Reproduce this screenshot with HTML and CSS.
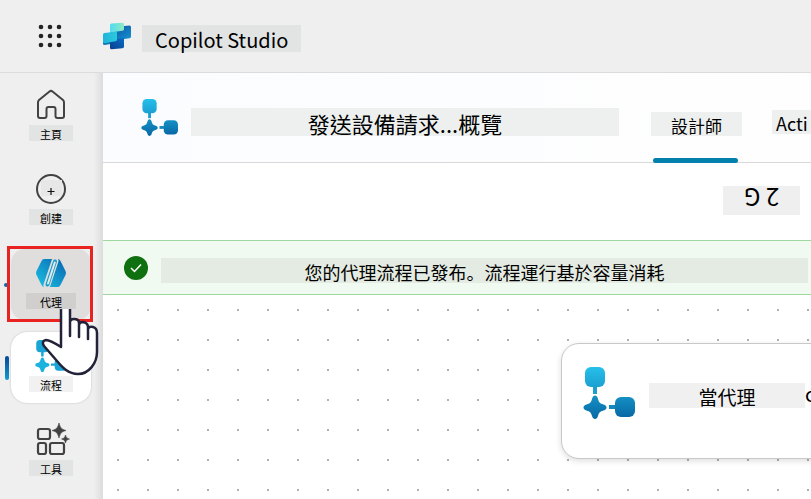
FILE: index.html
```html
<!DOCTYPE html>
<html lang="zh-Hant">
<head>
<meta charset="utf-8">
<meta name="viewport" content="width=device-width, initial-scale=1">
<title>Copilot Studio</title>
<link rel="stylesheet" href="styles.css">
</head>
<body>
<svg width="0" height="0" class="defs" aria-hidden="true">
  <defs>
    <linearGradient id="flowTop" x1="0" y1="0" x2="0" y2="1"><stop offset="0" stop-color="#25c0ea"/><stop offset="1" stop-color="#1ba0d2"/></linearGradient>
    <linearGradient id="flowLow" x1="0" y1="0" x2="0" y2="1"><stop offset="0" stop-color="#1590c4"/><stop offset="1" stop-color="#0768a6"/></linearGradient>
    <symbol id="flow" viewBox="0 0 52 52">
      <rect x="2" y="0" width="20" height="20" rx="6" fill="url(#flowTop)"/>
      <path d="M10 19h4v8h-4z" fill="#1c9fd0"/>
      <path d="M12 28.500c1.500 0 2.500 1.500 3 3.500 1 3.500 2 4.500 5.500 5.500 4 1 4 5 0 6-3.500 1-4.500 2-5.500 5.500-1 4-5 4-6 0-1-3.500-2-4.500-5.500-5.500-4-1-4-5 0-6 3.500-1 4.500-2 5.500-5.500 .5-2 1.500-3.500 3-3.500z" fill="url(#flowLow)"/>
      <path d="M26 38h8v4h-8z" fill="#1489bd"/>
      <rect x="32" y="30" width="20" height="20" rx="6" fill="url(#flowLow)"/>
    </symbol>
    <symbol id="flow-light" viewBox="0 0 52 52">
      <g fill="#19a4d6">
        <rect x="2" y="0" width="20" height="20" rx="6"/>
        <path d="M10 19h4v8h-4zM26 38h8v4h-8z"/>
        <path fill="#1bb2de" d="M12 28.500c1.500 0 2.500 1.500 3 3.500 1 3.500 2 4.500 5.500 5.500 4 1 4 5 0 6-3.500 1-4.500 2-5.500 5.500-1 4-5 4-6 0-1-3.500-2-4.500-5.500-5.500-4-1-4-5 0-6 3.500-1 4.500-2 5.500-5.500 .5-2 1.500-3.500 3-3.500z"/>
        <rect x="32" y="30" width="20" height="20" rx="6"/>
      </g>
    </symbol>
  </defs>
</svg>
<div class="app">
  <header class="topbar">
    <button class="waffle" aria-label="Apps">
      <svg width="24" height="24" viewBox="0 0 24 24" fill="#242424"><circle cx="3" cy="3" r="2.3"/><circle cx="12" cy="3" r="2.3"/><circle cx="21" cy="3" r="2.3"/><circle cx="3" cy="12" r="2.3"/><circle cx="12" cy="12" r="2.3"/><circle cx="21" cy="12" r="2.3"/><circle cx="3" cy="21" r="2.3"/><circle cx="12" cy="21" r="2.3"/><circle cx="21" cy="21" r="2.3"/></svg>
    </button>
    <svg width="30" height="28" viewBox="0 0 30 28" aria-hidden="true">
      <defs>
        <linearGradient id="lg1" x1="0" y1="0" x2="1" y2="0"><stop offset="0" stop-color="#4fdcf2"/><stop offset="1" stop-color="#8eeabf"/></linearGradient>
        <linearGradient id="lg2" x1="0" y1="0" x2="1" y2="1"><stop offset="0" stop-color="#0b4f9a"/><stop offset="1" stop-color="#1693d6"/></linearGradient>
        <linearGradient id="lg3" x1="0" y1="0" x2="1" y2="0"><stop offset="0" stop-color="#1fb4dc"/><stop offset="1" stop-color="#2cc8dc"/></linearGradient>
        <linearGradient id="lg4" x1="0" y1="1" x2="1" y2="0"><stop offset="0" stop-color="#073f91"/><stop offset="1" stop-color="#0d6cc4"/></linearGradient>
      </defs>
      <path d="M1 13L15 9L15 21L2.500 23Q1 23 1 21.500Z" fill="#0e78b4"/>
      <path d="M8 8L22 4L27.500 3.500Q29 3.500 29 5V14.500Q29 16 27.500 16.200L15 18L8 16Z" fill="url(#lg2)"/>
      <path d="M8 20L15 17L22 16V24.500Q22 26 20.500 26.200L9.500 27.200Q8 27.200 8 25.700Z" fill="url(#lg4)"/>
      <path d="M1 12.500Q1 11.300 2.500 11L15 9.500V17.500Q15 19 13.500 19.300L2 21.300Q1 21 1 19.500Z" fill="url(#lg3)"/>
      <path d="M8 3Q8 1.700 9.500 1.500L20.500 .8Q22 .8 22 2.300V7Q22 8.500 20.500 8.800L8 10.500Z" fill="url(#lg1)"/>
    </svg>
    <h1 class="brand">Copilot Studio</h1>
  </header>
  <div class="body">
    <nav class="rail">
      <a class="item home" href="#">
        <svg width="32" height="32" viewBox="0 0 32 32" fill="none" stroke="#424242" stroke-width="2" stroke-linejoin="round"><path d="M3 13.5Q3 12 4 11L14.5 2.500Q16 1.300 17.500 2.500L28 11Q29 12 29 13.500V27Q29 29 27 29H22.500Q20.500 29 20.500 27V20Q20.500 18 18.500 18H13.500Q11.500 18 11.500 20V27Q11.500 29 9.500 29H5Q3 29 3 27Z"/></svg>
        <span class="label">主頁</span>
      </a>
      <a class="item create" href="#">
        <svg width="32" height="32" viewBox="0 0 32 32" fill="none" stroke="#424242"><circle cx="16" cy="16" r="14" stroke-width="2"/><path fill="#e7e7e7" stroke="none" d="M6 7h21v16H6z"/><path d="M12.500 18.500h7M16 15v7" stroke="#111" stroke-width="1.200"/></svg>
        <span class="label">創建</span>
      </a>
      <a class="item agents" href="#">
        <svg width="32" height="32" viewBox="0 0 32 32"><defs><linearGradient id="hex" x1="0" y1="1" x2="1" y2="0"><stop offset="0" stop-color="#1cc4e4"/><stop offset="1" stop-color="#0862b0"/></linearGradient></defs><path d="M9 2H23Q24.500 2 25.500 4L30.500 14Q31.500 16 30.500 18L25.500 28Q24.500 30 23 30H9Q7.500 30 6.500 28L1.500 18Q.5 16 1.500 14L6.500 4Q7.500 2 9 2Z" fill="url(#hex)"/><path d="M20 4L12 28" stroke="#e0dedd" stroke-width="7" stroke-linecap="round"/><path d="M20 4.500L12.500 27.500" stroke="#159bcc" stroke-width="4" stroke-linecap="round"/><path d="M19.800 5.500L13 26.500" stroke="#e0eaee" stroke-width="2" stroke-linecap="round"/></svg>
        <span class="label">代理</span>
      </a>
      <a class="item flows" href="#" aria-current="page">
        <svg width="32" height="32"><use href="#flow-light"/></svg>
        <span class="label">流程</span>
      </a>
      <a class="item tools" href="#">
        <svg width="32" height="32" viewBox="0 0 32 32" fill="none" stroke="#424242" stroke-width="2.200"><rect x="3" y="5" width="12" height="10" rx="2"/><rect x="3" y="19" width="8" height="11" rx="2"/><rect x="15" y="19" width="14" height="11" rx="2"/><path d="M24 -1C25.500 4 26 5 31 6.500C26 8 25.500 9 24 14C22.500 9 22 8 17 6.500C22 5 22.500 4 24 -1ZM30.500 11C31.500 14 31.500 14 34.500 15C31.500 16 31.500 16 30.500 19C29.500 16 29.500 16 26.500 15C29.500 14 29.500 14 30.500 11Z" fill="#424242" stroke="#424242" stroke-width=".6"/></svg>
        <span class="label">工具</span>
      </a>
      <svg class="cursor" width="58" height="70" viewBox="0 0 58 70" aria-hidden="true"><path d="M20 39V1H29V28V14Q29 11 33 11Q38 11 38 15V29V17Q38 14 42 14Q47 15 47 19V31V21Q48 18 52 19Q56 20 56 25V44C56 55 48 66 37 66C27 66 21 59 16 53L3 38Q0 34 4 32Q7 31 20 39Z" fill="#fff"/><path d="M20 1V39Q9 32 5 32Q0 33 3 38L16 53C21 59 27 66 37 66C48 66 56 55 56 44V25Q56 20 52 19Q48 18 47 21V31V19Q47 15 42 14Q38 14 38 17V29V15Q38 11 33 11Q29 11 29 14V28V1" fill="none" stroke="#222238" stroke-width="2.500" stroke-linejoin="round"/></svg>
    </nav>
    <main class="panel">
      <div class="titlebar">
        <svg width="37" height="37" aria-hidden="true"><use href="#flow"/></svg>
        <h2 class="title">發送設備請求...概覽</h2>
        <div class="tabs" role="tablist">
          <button class="tab active" role="tab" aria-selected="true"><span>設計師</span></button>
          <button class="tab" role="tab" aria-selected="false"><span>Acti</span></button>
        </div>
      </div>
      <div class="toolbar"><button class="tool"><span>2 G</span></button></div>
      <div class="notice" role="status">
        <svg width="24" height="24" viewBox="0 0 24 24" aria-hidden="true"><circle cx="12" cy="12" r="12" fill="#0e700e"/><path d="M7 12l3.500 3.500L17 8.500" fill="none" stroke="#fff" stroke-width="1.500"/></svg>
        <p lang="zh">您的代理流程已發布。流程運行基於容量消耗</p>
      </div>
      <div class="canvas">
        <div class="node">
          <svg width="52" height="52" aria-hidden="true"><use href="#flow"/></svg>
          <span class="node-title">當代理</span><span class="node-more">c</span>
        </div>
      </div>
    </main>
  </div>
</div>
</body>
</html>
```
FILE: styles.css
```css
* { box-sizing: border-box; }
body { margin: 0; font-family: "Noto Sans CJK TC", "Noto Sans", sans-serif; color: #000; background: #efefef; overflow: hidden; }
button { border: 0; padding: 0; background: none; font: inherit; color: inherit; }
h1, h2, p { margin: 0; font-weight: 400; }
svg { display: block; flex: none; overflow: visible; }
.defs { position: absolute; }
.app { display: flex; flex-direction: column; height: 100vh; }
.topbar { display: flex; align-items: center; height: 73px; flex: none; padding-left: 38px; border-bottom: 1px solid #dcdcdc; }
.waffle { margin-right: 40px; }
.brand { margin: 4px 0 0 10px; padding: 2px 13px 0; background: #e2e4e3; font-size: 20px; line-height: 25px; }
.body { display: flex; flex: 1; min-height: 0; }
.rail { position: relative; width: 103px; flex: none; padding: 8px 12px 0 11px; background: linear-gradient(to right, #efefef 94px, #dcdcdc); }
.item { position: relative; display: flex; flex-direction: column; align-items: center; height: 71px; margin-bottom: 13px; padding-top: 8px; gap: 4px; border-radius: 14px; color: #000; text-decoration: none; }
.label { padding: 2px 11px 0; background: #e2e4e3; font-size: 11px; line-height: 14px; }
.agents { background: #e0dedd; margin-bottom: 12px; }
.agents .label { background: #d0cfce; padding: 2px 14px 0; }
.agents::after { content: ""; position: absolute; inset: -3px -2px -2px -4px; border: 3px solid #e92222; }
.agents::before { content: ""; position: absolute; left: -7px; top: 34px; width: 4px; height: 4px; background: #0869ad; border-radius: 2px; }
.flows { background: #fff; border-radius: 16px; box-shadow: 0 0 2px #bbb; }
.flows .label { background: #f0f1f0; }
.flows::before { content: ""; position: absolute; left: -6px; top: 24px; width: 4px; height: 24px; background: linear-gradient(#07489a, #109bd0); border-radius: 2px; }
.cursor { position: absolute; left: 41px; top: 235px; }
.panel { display: flex; flex-direction: column; flex: 1; min-width: 0; background: #fff; }
.titlebar { display: flex; align-items: center; height: 90px; flex: none; padding-left: 38px; background: linear-gradient(to right, #fbfcff, #fefefe); border-bottom: 1px solid #d9d9d9; }
.title { flex: 1; margin: 8px 32px 0 13px; padding-top: 2px; background: #eef0ef; text-align: center; font-size: 22px; line-height: 26px; }
.tabs { display: flex; height: 100%; width: 160px; flex: none; gap: 30px; }
.tab { position: relative; flex: none; height: 100%; padding-top: 12px; font-size: 17px; line-height: 21px; }
.tab span { display: block; padding: 3px 20px 0; background: #eef0ef; }
.tab + .tab { padding-top: 9px; font-size: 18px; }
.tab + .tab span { padding: 3px 4px 0; }
.active::after { content: ""; position: absolute; left: 2px; right: 4px; bottom: -1px; height: 5px; border-radius: 3px; background: #0480ad; }
.toolbar { display: flex; justify-content: flex-end; align-items: center; height: 77px; flex: none; padding: 0 11px 2px 0; }
.tool { background: #efefef; padding: 0 21px 4px; font-size: 24px; line-height: 25px; }
.tool span { display: block; transform: rotate(180deg); }
.notice { display: flex; align-items: center; height: 55px; flex: none; padding: 0 3px 0 21px; gap: 13px; background: #f1faf1; border: solid #9fd89f; border-width: 1px 0; }
.notice p { flex: 1; margin-top: 5px; padding-top: 3px; background: #e4ebe2; text-align: center; font-family: "Noto Sans CJK SC", sans-serif; font-size: 18px; line-height: 22px; white-space: nowrap; }
.canvas { flex: 1; min-height: 0; padding: 48px 0 0 458px; overflow: hidden; background: radial-gradient(circle, #b0b0b0 1px, transparent 1px) 0 0 / 30px 30px; }
.node { display: flex; align-items: center; height: 116px; margin-right: -40px; padding: 0 0 16px 21px; background: #fff; border: 1px solid #c8c8c8; border-radius: 18px; box-shadow: 0 2px 6px #0002; }
.node-title { flex: none; width: 156px; margin: 4px 0 0 14px; padding-top: 2px; background: #f0f0f0; text-align: center; font-size: 19px; line-height: 23px; }
.node-more { font-size: 20px; line-height: 25px; }
```
